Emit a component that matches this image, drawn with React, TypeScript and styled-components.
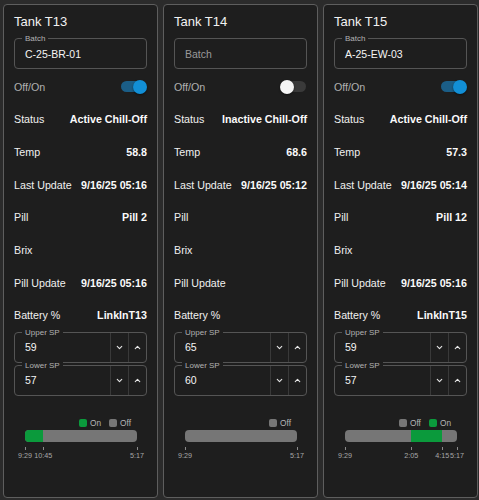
import { ChevronDown, ChevronUp } from "lucide-react";
import styled, { createGlobalStyle } from "styled-components";

const GlobalStyle = createGlobalStyle`
  html, body {
    margin: 0;
    padding: 0;
    background: #2b2b2b;
  }
  * {
    box-sizing: border-box;
  }
`;

type Segment = { start: number; end: number };
type Tick = { at: number; label: string };

type Tank = {
  name: string;
  batch: string;
  on: boolean;
  status: string;
  temp: string;
  lastUpdate: string;
  pill: string;
  brix: string;
  pillUpdate: string;
  battery: string;
  upper: string;
  lower: string;
  segments: Segment[];
  ticks: Tick[];
  legend: ("on" | "off")[];
};

const tanks: Tank[] = [
  {
    name: "Tank T13",
    batch: "C-25-BR-01",
    on: true,
    status: "Active Chill-Off",
    temp: "58.8",
    lastUpdate: "9/16/25 05:16",
    pill: "Pill 2",
    brix: "",
    pillUpdate: "9/16/25 05:16",
    battery: "LinkInT13",
    upper: "59",
    lower: "57",
    segments: [{ start: 0, end: 0.162 }],
    ticks: [
      { at: 0, label: "9:29" },
      { at: 0.162, label: "10:45" },
      { at: 1, label: "5:17" },
    ],
    legend: ["on", "off"],
  },
  {
    name: "Tank T14",
    batch: "",
    on: false,
    status: "Inactive Chill-Off",
    temp: "68.6",
    lastUpdate: "9/16/25 05:12",
    pill: "",
    brix: "",
    pillUpdate: "",
    battery: "",
    upper: "65",
    lower: "60",
    segments: [],
    ticks: [
      { at: 0, label: "9:29" },
      { at: 1, label: "5:17" },
    ],
    legend: ["off"],
  },
  {
    name: "Tank T15",
    batch: "A-25-EW-03",
    on: true,
    status: "Active Chill-Off",
    temp: "57.3",
    lastUpdate: "9/16/25 05:14",
    pill: "Pill 12",
    brix: "",
    pillUpdate: "9/16/25 05:16",
    battery: "LinkInT15",
    upper: "59",
    lower: "57",
    segments: [{ start: 0.592, end: 0.868 }],
    ticks: [
      { at: 0, label: "9:29" },
      { at: 0.592, label: "2:05" },
      { at: 0.868, label: "4:15" },
      { at: 1, label: "5:17" },
    ],
    legend: ["off", "on"],
  },
];

const ON_GREEN = "#0b9a3c";
const OFF_GRAY = "#767676";

const Page = styled.div`
  display: grid;
  grid-template-columns: repeat(3, 1fr);
  gap: 5px;
  height: 100vh;
  padding: 4px 1px 2px 3px;
  font-family: "Liberation Sans", Arial, sans-serif;
  color: #f2f2f2;
`;

const Card = styled.div`
  display: flex;
  flex-direction: column;
  background: #1e1e1e;
  border: 1px solid #5e5e5e;
  border-radius: 4px;
  padding: 8px 10px;
`;

const Title = styled.div`
  font-size: 13px;
  line-height: 18px;
  margin-bottom: 7px;
`;

const Field = styled.div<{ $height?: number }>`
  position: relative;
  display: flex;
  align-items: stretch;
  height: ${({ $height }) => $height ?? 31}px;
  border: 1px solid #555;
  border-radius: 4px;
  & + & {
    margin-top: 2px;
  }
`;

const FieldLabel = styled.span`
  position: absolute;
  top: -5px;
  left: 7px;
  padding: 0 3px;
  font-size: 8px;
  line-height: 9px;
  color: #b3b3b3;
  background: #1e1e1e;
`;

const FieldValue = styled.div<{ $placeholder?: boolean }>`
  flex: 1;
  display: flex;
  align-items: center;
  padding-left: 10px;
  font-size: 10.5px;
  color: ${({ $placeholder }) => ($placeholder ? "#9a9a9a" : "#f5f5f5")};
`;

const StepButton = styled.div`
  width: 18px;
  display: flex;
  align-items: center;
  justify-content: center;
  border-left: 1px solid #393939;
  color: #e6e6e6;
`;

const Row = styled.div`
  display: flex;
  align-items: center;
  justify-content: space-between;
  height: 32.67px;
  font-size: 10.7px;
`;

const SwitchRow = styled(Row)`
  margin-top: 1.5px;
  color: #b0b0b0;
`;

const RowLabel = styled.span`
  color: #f0f0f0;
`;

const RowValue = styled.span`
  font-weight: 700;
  color: #fafafa;
`;

const SwitchTrack = styled.div<{ $on: boolean }>`
  position: relative;
  width: 25px;
  height: 11px;
  margin-right: 1px;
  border-radius: 6px;
  background: ${({ $on }) => ($on ? "#1b5e87" : "#3a3a3a")};
`;

const SwitchThumb = styled.div<{ $on: boolean }>`
  position: absolute;
  top: -1.5px;
  left: ${({ $on }) => ($on ? "12px" : "-1px")};
  width: 14px;
  height: 14px;
  border-radius: 50%;
  background: ${({ $on }) => ($on ? "#128fd6" : "#f5f5f5")};
  box-shadow: 0 1px 2px rgba(0, 0, 0, 0.5);
`;

const Chart = styled.div`
  margin-top: 22px;
  padding: 0 10px 0 11px;
`;

const Legend = styled.div`
  display: flex;
  justify-content: flex-end;
  align-items: center;
  gap: 8px;
  padding-right: 6px;
  height: 10px;
  font-size: 8.3px;
  color: #b5b5b5;
`;

const LegendItem = styled.span`
  display: flex;
  align-items: center;
  gap: 3px;
`;

const Swatch = styled.span<{ $color: string }>`
  width: 8px;
  height: 8px;
  border-radius: 2px;
  background: ${({ $color }) => $color};
`;

const Bar = styled.div`
  position: relative;
  height: 12px;
  margin-top: 2px;
  border-radius: 4px;
  overflow: hidden;
  background: ${OFF_GRAY};
`;

const BarSegment = styled.div`
  position: absolute;
  top: 0;
  bottom: 0;
  background: ${ON_GREEN};
`;

const Axis = styled.div`
  position: relative;
  height: 20px;
  margin-top: 5px;
`;

const TickMark = styled.div`
  position: absolute;
  top: 0;
  display: flex;
  flex-direction: column;
  align-items: center;
  transform: translateX(-50%);
  font-size: 7.2px;
  color: #a8a8a8;
  &::before {
    content: "";
    width: 1px;
    height: 3px;
    margin-bottom: 1px;
    background: #8a8a8a;
  }
`;

const SpinField = ({ label, value }: { label: string; value: string }) => (
  <Field $height={31}>
    <FieldLabel>{label}</FieldLabel>
    <FieldValue>{value}</FieldValue>
    <StepButton>
      <ChevronDown size={9} strokeWidth={3} />
    </StepButton>
    <StepButton>
      <ChevronUp size={9} strokeWidth={3} />
    </StepButton>
  </Field>
);

const TankCard = ({ tank }: { tank: Tank }) => {
  const rows: [string, string][] = [
    ["Status", tank.status],
    ["Temp", tank.temp],
    ["Last Update", tank.lastUpdate],
    ["Pill", tank.pill],
    ["Brix", tank.brix],
    ["Pill Update", tank.pillUpdate],
    ["Battery %", tank.battery],
  ];

  return (
    <Card>
      <Title>{tank.name}</Title>
      <Field>
        {tank.batch && <FieldLabel>Batch</FieldLabel>}
        <FieldValue $placeholder={!tank.batch}>{tank.batch || "Batch"}</FieldValue>
      </Field>
      <SwitchRow>
        <span>Off/On</span>
        <SwitchTrack $on={tank.on}>
          <SwitchThumb $on={tank.on} />
        </SwitchTrack>
      </SwitchRow>
      {rows.map(([label, value]) => (
        <Row key={label}>
          <RowLabel>{label}</RowLabel>
          <RowValue>{value}</RowValue>
        </Row>
      ))}
      <div>
        <SpinField label="Upper SP" value={tank.upper} />
        <SpinField label="Lower SP" value={tank.lower} />
      </div>
      <Chart>
        <Legend>
          {tank.legend.map((kind) => (
            <LegendItem key={kind}>
              <Swatch $color={kind === "on" ? ON_GREEN : OFF_GRAY} />
              {kind === "on" ? "On" : "Off"}
            </LegendItem>
          ))}
        </Legend>
        <Bar>
          {tank.segments.map((s, i) => (
            <BarSegment
              key={i}
              style={{ left: `${s.start * 100}%`, width: `${(s.end - s.start) * 100}%` }}
            />
          ))}
        </Bar>
        <Axis>
          {tank.ticks.map((t) => (
            <TickMark key={t.label} style={{ left: `${t.at * 100}%` }}>
              {t.label}
            </TickMark>
          ))}
        </Axis>
      </Chart>
    </Card>
  );
};

export default function App() {
  return (
    <>
      <GlobalStyle />
      <Page>
        {tanks.map((t) => (
          <TankCard key={t.name} tank={t} />
        ))}
      </Page>
    </>
  );
}
